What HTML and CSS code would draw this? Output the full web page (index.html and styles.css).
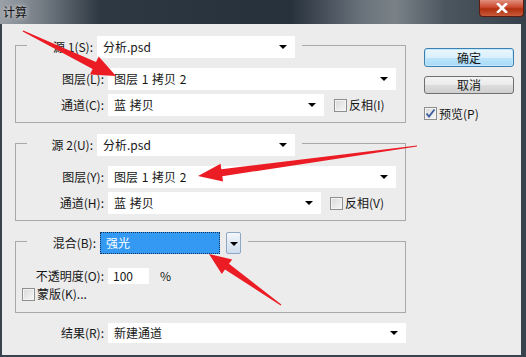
FILE: index.html
```html
<!DOCTYPE html>
<html>
<head>
	<title>计算</title>
	<link rel="stylesheet" href="styles.css">
</head>
<body>
	<div class="window">
		<div class="titlebar">
			<span class="title">计算</span>
			<span class="close">
				<svg width="12" height="10" viewBox="0 0 12 10"><path d="M2 1 L10 9 M10 1 L2 9" stroke="#fff" stroke-width="2.6" stroke-linecap="square"/></svg>
			</span>
		</div>
		<div class="client">
			<div class="main">
				<div class="group g1">
					<div class="head">
						<span class="lbl">源 1(S):</span>
						<div class="select s-src">分析.psd</div>
					</div>
					<div class="row">
						<span class="lbl">图层(L):</span>
						<div class="select s-full">图层&nbsp;1&nbsp;拷贝&nbsp;2</div>
					</div>
					<div class="row">
						<span class="lbl">通道(C):</span>
						<div class="select s-chan">蓝&nbsp;拷贝</div>
						<label class="check"><i class="box"></i>反相(I)</label>
					</div>
				</div>

				<div class="group g2">
					<div class="head">
						<span class="lbl">源 2(U):</span>
						<div class="select s-src">分析.psd</div>
					</div>
					<div class="row">
						<span class="lbl">图层(Y):</span>
						<div class="select s-full">图层&nbsp;1&nbsp;拷贝&nbsp;2</div>
					</div>
					<div class="row">
						<span class="lbl">通道(H):</span>
						<div class="select s-chan">蓝&nbsp;拷贝</div>
						<label class="check"><i class="box"></i>反相(V)</label>
					</div>
				</div>

				<div class="group g3">
					<div class="head">
						<span class="lbl">混合(B):</span>
						<div class="combo">强光</div>
						<span class="dd-btn"></span>
					</div>
					<div class="row op">
						<span class="lbl">不透明度(O):</span>
						<div class="num">100</div>
						<span class="pct">%</span>
					</div>
					<div class="row mask">
						<label class="check"><i class="box"></i>蒙版(K)...</label>
					</div>
				</div>

				<div class="row result">
					<span class="lbl">结果(R):</span>
					<div class="select s-res">新建通道</div>
				</div>
			</div>

			<div class="side">
				<div class="btn default">确定</div>
				<div class="btn cancel">取消</div>
				<label class="check preview">
					<i class="box">
						<svg width="11" height="11" viewBox="0 0 11 11"><path d="M1.5 5.5 L4 8.5 L9.5 1.5" fill="none" stroke="#3d5c9e" stroke-width="1.8"/></svg>
					</i>预览(P)
				</label>
			</div>
		</div>

		<svg class="arrows" width="526" height="357" viewBox="0 0 526 357">
			<polygon points="23.3,30.4 96,61.9 98.7,56.5 116,76 89.9,74.5 92.6,69.1 22.7,31.6"/>
			<polygon points="417,145.4 221.3,169.2 220.6,163.8 198,176 223,181.6 222.3,176.2 417,146.6"/>
			<polygon points="281.3,304.6 229,263.8 232.2,259.4 209,254 221.8,274 225,269.6 280.7,305.4"/>
		</svg>
	</div>
</body>
</html>
```

FILE: styles.css
```css
*{
	box-sizing: border-box;
}
body{
	margin: 0;
	padding: 0;
	font-family: "Noto Sans CJK SC", "Noto Sans", sans-serif;
	font-size: 12px;
	color: #161616;
}
.window{
	position: relative;
	width: 526px;
	height: 357px;
	background: #39434d;
}

/* title bar */
.titlebar{
	display: flex;
	justify-content: space-between;
	height: 24px;
	background: linear-gradient(90deg, #9aa0a6 0, #767e86 40px, #2e3842 100px, #27313b 290px, #68707a 360px, #7a8288 395px, #4c565f 445px, #36404a 526px);
}
.title{
	padding: 5px 0 0 3px;
	line-height: 14px;
	font-size: 12px;
	color: #111;
	text-shadow: 0 0 5px rgba(255,255,255,.9);
}
.close{
	display: flex;
	align-items: center;
	justify-content: center;
	width: 45px;
	height: 17px;
	margin-right: 2px;
	border: 1px solid #5b1d12;
	border-top: none;
	border-radius: 0 0 4px 4px;
	background: linear-gradient(#e0907e, #cc4a2e 45%, #b0300f 55%, #c85a3a);
}

/* client area */
.client{
	display: flex;
	width: 519px;
	height: 331px;
	margin-left: 2px;
	padding: 21px 0 0 13px;
	background: #ececec;
}
.main{
	width: 391px;
}
.side{
	width: 90px;
	margin-left: 18px;
	padding-top: 3px;
}

.group{
	border: 1px solid #a9a9a9;
	padding-bottom: 6px;
}
.g2{
	margin-top: 20px;
}
.g3{
	margin-top: 20px;
	padding-bottom: 10px;
}
.head{
	display: flex;
	align-items: center;
	width: fit-content;
	height: 22px;
	margin: -10px 0 0 11px;
	padding-right: 7px;
	background: #ececec;
}
.head .lbl{
	width: 66px;
}
.g3 .head .lbl{
	width: 69px;
}

.row{
	display: flex;
	align-items: center;
	height: 22px;
	margin-top: 4px;
}
.head + .row{
	margin-top: 10px;
}
.lbl{
	width: 88px;
	margin-right: 4px;
	text-align: right;
	line-height: 1;
	white-space: nowrap;
}

.select{
	position: relative;
	display: flex;
	align-items: center;
	height: 22px;
	padding-left: 6px;
	background: #fff;
	line-height: 1;
	word-spacing: 1px;
}
.select:after{
	content: "";
	position: absolute;
	right: 8px;
	top: 50%;
	margin-top: -2px;
	border-left: 4px solid transparent;
	border-right: 4px solid transparent;
	border-top: 4px solid #000;
}
.s-src{
	width: 198px;
}
.s-full{
	width: 288px;
}
.s-chan{
	width: 216px;
}
.g2 .s-chan{
	width: 213px;
}

.check{
	display: flex;
	align-items: center;
	margin-left: 10px;
	line-height: 1;
}
.g2 .check{
	margin-left: 9px;
}
.box{
	display: flex;
	align-items: center;
	justify-content: center;
	width: 13px;
	height: 13px;
	margin-right: 2px;
	border: 1px solid #8e8f8f;
	background: linear-gradient(135deg, #d8d8d8, #f8f8f8);
	box-shadow: inset 0 0 0 1px #f4f4f4;
}

/* blend group */
.combo{
	display: flex;
	align-items: center;
	width: 120px;
	height: 22px;
	padding-left: 5px;
	border: 1px dotted #12325a;
	background: #3399f3;
	color: #fff;
	line-height: 1;
}
.dd-btn{
	position: relative;
	width: 15px;
	height: 22px;
	margin-left: 6px;
	border: 1px solid #8ea7c4;
	border-radius: 2px;
	background: linear-gradient(#f4f8fc, #dfe9f4 50%, #cfdeee);
}
.dd-btn:after{
	content: "";
	position: absolute;
	left: 3px;
	top: 9px;
	border-left: 4px solid transparent;
	border-right: 4px solid transparent;
	border-top: 4px solid #000;
}
.op{
	height: 20px;
}
.head + .op{
	margin-top: 12px;
}
.num{
	display: flex;
	align-items: center;
	width: 41px;
	height: 16px;
	padding-left: 5px;
	background: #fff;
	line-height: 1;
}
.pct{
	margin-left: 11px;
	line-height: 1;
}
.mask{
	height: 16px;
	margin-top: 0;
	padding-left: 6px;
}
.mask .check{
	margin-left: 0;
}

.result{
	height: 20px;
	margin-top: 10px;
}
.result .lbl{
	width: 89px;
}
.s-res{
	width: 298px;
	height: 20px;
}

/* buttons */
.btn{
	height: 19px;
	border: 1px solid #707070;
	border-radius: 3px;
	background: linear-gradient(#f3f3f3, #ebebeb 50%, #dddddd 50%, #cfcfcf);
	text-align: center;
	line-height: 17px;
}
.default{
	border-color: #3c7fb1;
	background: linear-gradient(#eaf6fd, #d9f0fc 50%, #bee6fd 50%, #a7d9f5);
	box-shadow: inset 0 0 0 1px #c4e8fb;
}
.cancel{
	height: 18px;
	margin-top: 9px;
	line-height: 16px;
}
.preview{
	margin: 13px 0 0 0;
}

/* annotation arrows */
.arrows{
	position: absolute;
	left: 0;
	top: 0;
	pointer-events: none;
}
.arrows polygon{
	fill: #ec1c24;
}
```
